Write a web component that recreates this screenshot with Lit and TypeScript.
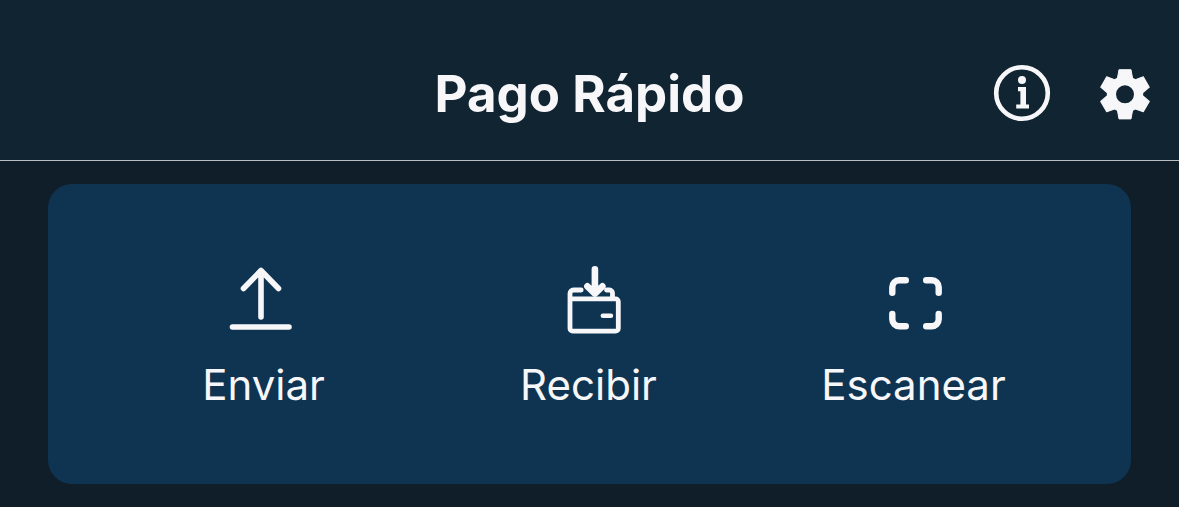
import { LitElement, html, css, svg } from "lit";
import { customElement } from "lit/decorators.js";

const info = svg`
  <svg class="icon" viewBox="0 0 60 60" width="60" height="60" aria-hidden="true">
    <circle cx="30" cy="29" r="25.8" fill="none" stroke="currentColor" stroke-width="4.6" />
    <circle cx="30" cy="16" r="4" fill="currentColor" />
    <path d="M26 23h8v17.400h3v4H24.200v-4h4.200V27.200H26z" fill="currentColor" />
  </svg>`;

const gear = svg`
  <svg class="icon" viewBox="-30 -30.300 60 60" width="60" height="60" aria-hidden="true">
    <circle r="13.600" fill="none" stroke="currentColor" stroke-width="9.200" />
    ${[0, 60, 120, 180, 240, 300].map(
      (angle) => svg`
        <path
          transform="rotate(${angle})"
          d="M-7.500 -16.400-6 -24.600H6L7.500 -16.400z"
          fill="currentColor" stroke="currentColor" stroke-width="1" stroke-linejoin="round"
        />`,
    )}
  </svg>`;

const send = svg`
  <svg class="icon" viewBox="0 0 80 80" width="80" height="80" aria-hidden="true">
    <path
      d="M37 57V10.500M19.500 28.500 37 10.500l17.500 18M8.500 67h56.500"
      fill="none" stroke="currentColor" stroke-width="5.600"
      stroke-linecap="round" stroke-linejoin="round"
    />
  </svg>`;

const receive = svg`
  <svg class="icon" viewBox="0 0 80 80" width="80" height="80" aria-hidden="true">
    <g fill="none" stroke="currentColor" stroke-linecap="round" stroke-linejoin="round">
      <path
        stroke-width="4.800"
        d="M32.200 30H24.500a3.500 3.500 0 0 0-3.500 3.500V68.500a2.700 2.700 0 0 0 2.700 2.700H66.600a2.700 2.700 0 0 0 2.700-2.700V41.500a2.700 2.700 0 0 0-2.700-2.700H21M57.500 30h3a3 3 0 0 1 3 3v5.500"
      />
      <path stroke-width="4.600" d="M53.900 55.700h8" />
      <path stroke-width="6.600" d="M45.900 9.300V32M38.400 26.300l7.500 7.200 7.500-7.200" />
    </g>
  </svg>`;

const scan = svg`
  <svg class="icon" viewBox="0 0 80 80" width="80" height="80" aria-hidden="true">
    <path
      d="M18.300 32.800V27.300a7 7 0 0 1 7-7h6.500M52.200 20.300h5.500a7 7 0 0 1 7 7v5.500M64.700 54v5.300a7 7 0 0 1-7 7h-5.500M31.800 66.300h-6.500a7 7 0 0 1-7-7V54"
      fill="none" stroke="currentColor" stroke-width="6.400" stroke-linecap="round"
    />
  </svg>`;

const actions = [
  { label: "Enviar", icon: send },
  { label: "Recibir", icon: receive },
  { label: "Escanear", icon: scan },
];

@customElement("app-root")
export class AppRoot extends LitElement {
  static styles = css`
    :host {
      display: block;
      min-height: 100vh;
      background: #101e2a;
      color: #f7f7fa;
      font-family: Inter, "Liberation Sans", sans-serif;
    }
    .header {
      display: grid;
      grid-template-columns: 1fr auto 1fr;
      align-items: center;
      padding: 56px 24px 28px;
      background: #102431;
      border-bottom: 1px solid #b9bfc0;
    }
    .title {
      grid-column: 2;
      margin: 0;
      font-size: 51px;
      line-height: 76px;
      font-weight: 700;
    }
    .tools {
      display: flex;
      justify-content: flex-end;
      align-items: center;
      gap: 43px;
    }
    .button {
      display: flex;
      padding: 0;
      border: 0;
      background: none;
      color: inherit;
      font: inherit;
      cursor: pointer;
    }
    .icon {
      display: block;
    }
    .card {
      display: grid;
      grid-template-columns: repeat(3, 1fr);
      margin: 23px 48px;
      padding: 76px 55px 70px 53px;
      border-radius: 24px;
      background: #0f3451;
    }
    .action {
      flex-direction: column;
      align-items: center;
      gap: 16px;
      font-size: 42px;
      line-height: 58px;
      font-weight: 400;
    }
  `;

  render() {
    return html`
      <header class="header">
        <h1 class="title">Pago Rápido</h1>
        <div class="tools">
          <button class="button" aria-label="Información">${info}</button>
          <button class="button" aria-label="Ajustes">${gear}</button>
        </div>
      </header>
      <main class="card">
        ${actions.map(
          ({ label, icon }) => html`
            <button class="button action">${icon}<span>${label}</span></button>
          `,
        )}
      </main>
    `;
  }
}
